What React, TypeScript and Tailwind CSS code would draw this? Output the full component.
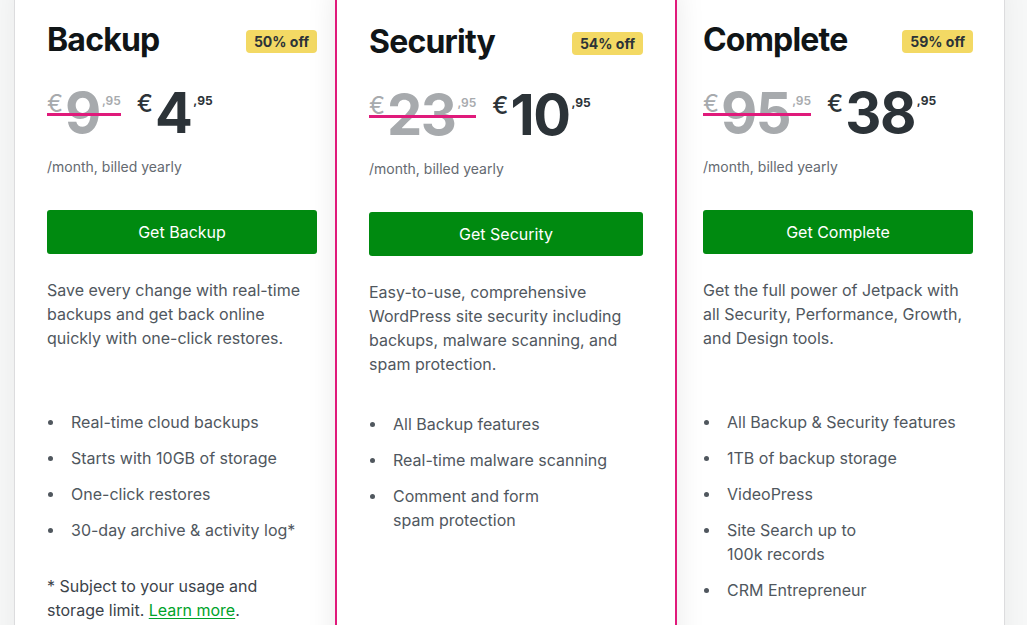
import React from 'react';

type Plan = {
  name: string;
  badge: string;
  oldPrice: string;
  newPrice: string;
  cta: string;
  description: string;
  features: React.ReactNode[];
  footnote?: boolean;
  featured?: boolean;
};

const plans: Plan[] = [
  {
    name: 'Backup',
    badge: '50% off',
    oldPrice: '9',
    newPrice: '4',
    cta: 'Get Backup',
    description: 'Save every change with real-time backups and get back online quickly with one-click restores.',
    features: [
      'Real-time cloud backups',
      'Starts with 10GB of storage',
      'One-click restores',
      '30-day archive & activity log*',
    ],
    footnote: true,
  },
  {
    name: 'Security',
    badge: '54% off',
    oldPrice: '23',
    newPrice: '10',
    cta: 'Get Security',
    description:
      'Easy-to-use, comprehensive WordPress site security including backups, malware scanning, and spam protection.',
    features: [
      'All Backup features',
      'Real-time malware scanning',
      <>
        Comment and form
        <br />
        spam protection
      </>,
    ],
    featured: true,
  },
  {
    name: 'Complete',
    badge: '59% off',
    oldPrice: '95',
    newPrice: '38',
    cta: 'Get Complete',
    description: 'Get the full power of Jetpack with all Security, Performance, Growth, and Design tools.',
    features: [
      'All Backup & Security features',
      '1TB of backup storage',
      'VideoPress',
      <>
        Site Search up to
        <br />
        100k records
      </>,
      'CRM Entrepreneur',
    ],
  },
];

const Price: React.FC<{ value: string; old?: boolean }> = ({ value, old }) => (
  <div className={`relative flex items-start h-[56px] ${old ? 'text-[#a7aaad]' : 'text-[#2c3338]'}`}>
    <span className={`mt-[7px] text-[24px] leading-none ${old ? 'font-normal' : 'font-medium'}`}>€</span>
    <span className="ml-[2px] text-[56px] font-bold leading-none tracking-[-1.5px]">{value}</span>
    <span className={`ml-[2px] mt-[10px] text-[12px] leading-none ${old ? 'font-semibold' : 'font-bold'}`}>,95</span>
    {old && <span className="absolute left-0 right-0 top-[28px] h-[3px] bg-[#e01a7b]" />}
  </div>
);

const PlanCard: React.FC<{ plan: Plan; className: string }> = ({ plan, className }) => (
  <div className={`shrink-0 bg-white -mt-[13px] pb-[60px] ${className}`}>
    {/* Header */}
    <div className="flex items-start justify-between">
      <h2 className="text-[32px] font-bold leading-[40px] tracking-[-0.8px] text-[#101517]">{plan.name}</h2>
      <span className="mt-[10px] rounded-[4px] bg-[#f3d964] px-[8px] text-[14px] font-bold leading-[23px] text-[#2c3338]">
        {plan.badge}
      </span>
    </div>

    {/* Prices */}
    <div className="mt-[25px] flex items-start gap-[16px]">
      <Price value={plan.oldPrice} old />
      <Price value={plan.newPrice} />
    </div>
    <p className="mt-[16px] text-[14px] leading-[20px] text-[#646970]">/month, billed yearly</p>

    <button className="mt-[33px] flex h-[44px] w-full items-center justify-center rounded-[3px] bg-[#008a10] text-[16px] font-normal text-white">
      {plan.cta}
    </button>

    <p className="mt-[24px] min-h-[96px] text-[16px] leading-[24px] text-[#50575e]">{plan.description}</p>

    <ul className="mt-[36px] flex flex-col gap-[12px]">
      {plan.features.map((f, i) => (
        <li key={i} className="flex items-start text-[16px] leading-[24px] text-[#50575e]">
          <span className="mt-[10px] ml-[1px] mr-[18px] h-[5px] w-[5px] shrink-0 rounded-full bg-[#50575e]" />
          <span>{f}</span>
        </li>
      ))}
    </ul>

    {plan.footnote && (
      <p className="mt-[32px] text-[16px] leading-[24px] text-[#3c434a]">
        * Subject to your usage and storage limit.{' '}
        <a href="#" className="text-[#00a32a] underline underline-offset-2">
          Learn more
        </a>
        .
      </p>
    )}
  </div>
);

export default function App() {
  return (
    <div className="h-[625px] w-full overflow-hidden bg-[#f6f7f7] font-['Inter','Liberation_Sans',sans-serif] antialiased">
      <div className="flex items-stretch pl-[14px]">
        <PlanCard
          plan={plans[0]}
          className="w-[335px] border border-[#dcdcde] pt-[32px] pl-[32px] pr-[31px] shadow-[0_0_24px_rgba(0,0,0,0.05)]"
        />
        <PlanCard
          plan={plans[1]}
          className="relative z-10 -ml-[14px] -mr-[6px] w-[342px] border-2 border-[#e01a7b] pt-[33px] px-[32px] shadow-[0_0_28px_rgba(0,0,0,0.09)]"
        />
        <PlanCard
          plan={plans[2]}
          className="w-[334px] border border-[#dcdcde] pt-[32px] px-[31px] shadow-[0_0_24px_rgba(0,0,0,0.05)]"
        />
      </div>
    </div>
  );
}
